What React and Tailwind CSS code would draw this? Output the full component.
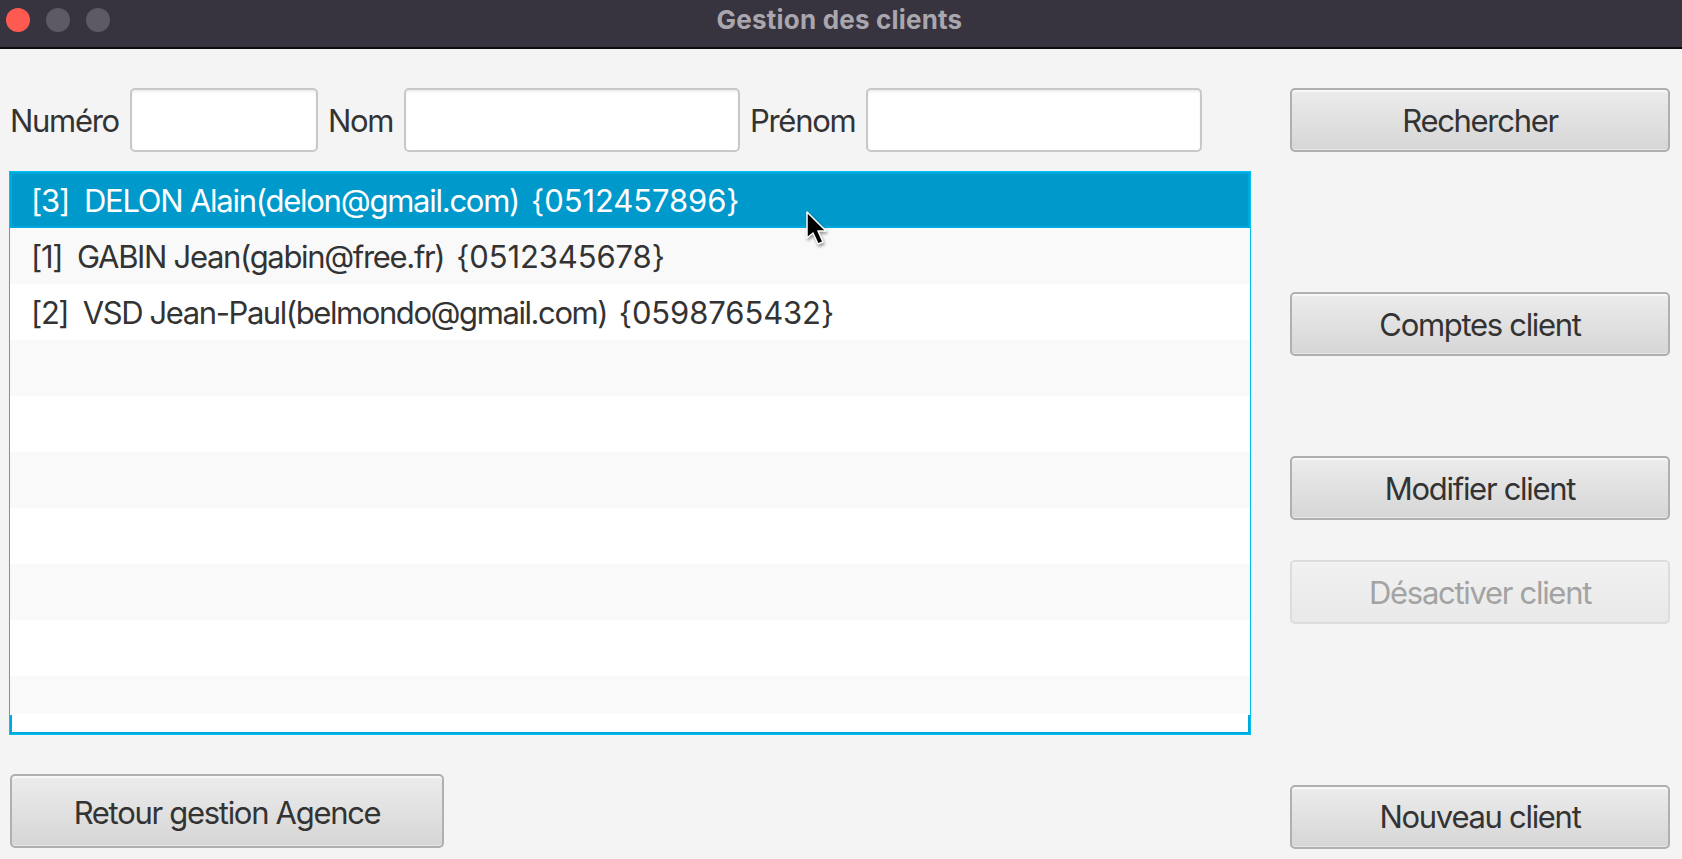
const font = { fontFamily: 'Inter, "Liberation Sans", sans-serif' };

function Btn({ children, className = "", disabled = false }) {
  return (
    <div
      className={
        "flex items-center justify-center rounded-[5px] border-2 text-[31px] tracking-[-1.3px] " +
        (disabled
          ? "border-[#dcdcdc] bg-gradient-to-b from-[#f1f1f1] to-[#e9e9e9] text-[#a3a3a3] shadow-[inset_0_1px_0_#f6f6f6] "
          : "border-[#b0b0b0] bg-gradient-to-b from-[#ececec] to-[#d6d6d6] text-[#333333] shadow-[inset_0_2px_0_#f7f7f7,inset_0_-1px_0_#e6e6e6] ") +
        className
      }
    >
      {children}
    </div>
  );
}

function Field({ className }) {
  return (
    <div
      className={
        "h-[64px] rounded-[5px] border-2 border-[#c8c8c8] bg-white shadow-[inset_0_2px_2px_#efefef] " +
        className
      }
    />
  );
}

const rows = [
  { text: "[3]  DELON Alain(delon@gmail.com)  ", num: "{0512457896}", selected: true, track: "tracking-[-1.25px]" },
  { text: "[1]  GABIN Jean(gabin@free.fr)  ", num: "{0512345678}", bg: "bg-[#f9f9f9]", track: "tracking-[-1.33px]" },
  { text: "[2]  VSD Jean-Paul(belmondo@gmail.com)  ", num: "{0598765432}", bg: "bg-white", track: "tracking-[-1.42px]" },
  { text: "", num: "", bg: "bg-[#f9f9f9]" },
  { text: "", num: "", bg: "bg-white" },
  { text: "", num: "", bg: "bg-[#f9f9f9]" },
  { text: "", num: "", bg: "bg-white" },
  { text: "", num: "", bg: "bg-[#f9f9f9]" },
  { text: "", num: "", bg: "bg-white" },
];

export default function App() {
  return (
    <div className="relative flex h-[859px] w-[1682px] flex-col overflow-hidden bg-[#f4f4f4]" style={font}>
      <header className="relative flex h-[49px] shrink-0 items-center justify-center border-b-2 border-[#0c0c0e] bg-[#37333f]">
        <div className="absolute left-[6px] top-[8px] flex gap-[16px]">
          <span className="h-[24px] w-[24px] rounded-full bg-[#ff5a52]" />
          <span className="h-[24px] w-[24px] rounded-full bg-[#5e5a65]" />
          <span className="h-[24px] w-[24px] rounded-full bg-[#5e5a65]" />
        </div>
        <span className="mr-[3px] pb-[9px] text-[26px] font-bold tracking-[0.2px] text-[#a9a7ad]">Gestion des clients</span>
      </header>

      <main className="flex flex-1">
        <div className="ml-[9px] flex w-[1242px] flex-col">
          <div className="mt-[39px] flex h-[64px] items-center pt-[2px] text-[31px] tracking-[-1.3px] text-[#333333]">
            <span className="ml-px w-[120px]">Numéro</span>
            <Field className="-mt-[2px] w-[188px]" />
            <span className="ml-[10px] w-[76px]">Nom</span>
            <Field className="-mt-[2px] w-[336px]" />
            <span className="ml-[10px] w-[116px]">Prénom</span>
            <Field className="-mt-[2px] w-[336px]" />
          </div>

          <div className="relative mt-[19px] flex h-[564px] flex-col overflow-hidden border border-[#00c0ee] bg-white">
            {rows.map((r, i) => (
              <div
                key={i}
                className={
                  "flex h-[56px] shrink-0 items-center whitespace-pre pt-[3px] text-[31px] " +
                  (r.track ? r.track + " " : "") +
                  (r.selected
                    ? "border-2 border-[#00a9dd] bg-[#0099cc] pl-[19px] text-white"
                    : r.bg + " pl-[21px] text-[#333333]")
                }
              >
                {r.text}
                <span className="-ml-[3px] tracking-[-0.1px]">{r.num}</span>
              </div>
            ))}
            <div className="h-[38px] shrink-0 bg-[#f9f9f9]" />
            <div className="flex-1 bg-white" />
            <div className="absolute bottom-0 left-0 top-[543px] w-[2px] bg-[#00a9dd]" />
            <div className="absolute bottom-0 right-0 top-[543px] w-[2px] bg-[#00a9dd]" />
            <div className="absolute bottom-0 left-0 right-0 h-[2px] bg-[#00a9dd]" />
          </div>

          <Btn className="ml-px mt-[39px] h-[74px] w-[434px] pt-[4px]">Retour gestion Agence</Btn>
        </div>

        <div className="ml-[39px] flex w-[380px] flex-col pt-[39px]">
          <Btn className="h-[64px] pt-[2px]">Rechercher</Btn>
          <Btn className="mt-[140px] h-[64px] pt-[2px]">Comptes client</Btn>
          <Btn className="mt-[100px] h-[64px] pt-[2px]">Modifier client</Btn>
          <Btn disabled className="mt-[40px] h-[64px] pt-[2px]">Désactiver client</Btn>
          <Btn className="mt-[161px] h-[64px]">Nouveau client</Btn>
        </div>
      </main>

      <svg className="absolute left-[800px] top-[208px]" width="36" height="44" viewBox="0 0 36 44">
        <path d="M7 4 L7 30 L13 25 L18 36 L23 34 L18 23 L26 23 Z" fill="#000" stroke="#fff" strokeWidth="1.5" strokeLinejoin="round" style={{ filter: "drop-shadow(1px 2px 1.5px rgba(0,0,0,.4))" }} />
      </svg>
    </div>
  );
}
